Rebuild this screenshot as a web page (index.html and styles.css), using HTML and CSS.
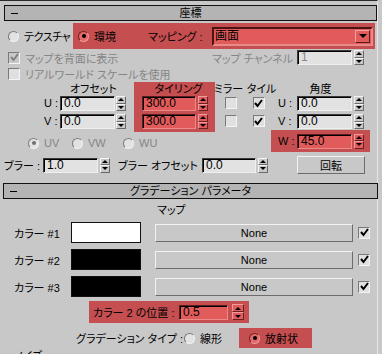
FILE: index.html
```html
<!DOCTYPE html>
<html>
<head>
    <title>座標 / グラデーション パラメータ</title>
    <link rel="stylesheet" href="styles.css">
</head>
<body>
<div class="frame">
    <div class="rollout"><span class="minus"></span><span class="rtitle">座標</span><span></span></div>

    <div class="row row-mode">
        <div class="opt opt-tex"><span class="radio"></span><span class="tex-text">テクスチャ</span></div>
        <div class="hl hl-mode">
            <div class="opt opt-env"><span class="radio on red"></span><span>環境</span></div>
            <span class="lbl-map">マッピング :</span>
            <div class="dropdown">
                <span class="dd-text">画面</span>
                <span class="dd-btn"><span class="tri-down"></span></span>
            </div>
        </div>
    </div>

    <div class="row row-chk">
        <span class="cb dis"><svg width="9" height="9" viewBox="0 0 9 9"><polyline points="1,4 3.5,7 8,1" fill="none" stroke="#808080" stroke-width="2"/></svg></span>
        <span class="dis-text w-back">マップを背面に表示</span>
        <span class="dis-text w-chan">マップ チャンネル :</span>
        <span class="field dis-field w55">1</span>
        <span class="spin"><span class="sb"><span class="tri-up"></span></span><span class="sb"><span class="tri-down"></span></span></span>
    </div>

    <div class="row row-chk2">
        <span class="cb"></span>
        <span class="dis-text w-real">リアルワールド スケールを使用</span>
    </div>

    <div class="sect">
        <div class="sect-left">
            <div class="sect-top">
                <div class="col col-lbl">
                    <div class="chead"></div>
                    <div class="crow18">U :</div>
                    <div class="crow18">V :</div>
                </div>
                <div class="col col-off">
                    <div class="chead">オフセット</div>
                    <div class="crow18"><span class="field w55">0.0</span><span class="spin ml1"><span class="sb"><span class="tri-up"></span></span><span class="sb"><span class="tri-down"></span></span></span></div>
                    <div class="crow18"><span class="field w55">0.0</span><span class="spin ml1"><span class="sb"><span class="tri-up"></span></span><span class="sb"><span class="tri-down"></span></span></span></div>
                </div>
                <div class="col hl hl-tile">
                    <div class="chead">タイリング</div>
                    <div class="crow18"><span class="field red w54">300.0</span><span class="spin red ml2"><span class="sb"><span class="tri-up"></span></span><span class="sb"><span class="tri-down"></span></span></span></div>
                    <div class="crow18"><span class="field red w54">300.0</span><span class="spin red ml2"><span class="sb"><span class="tri-up"></span></span><span class="sb"><span class="tri-down"></span></span></span></div>
                </div>
                <div class="col col-mir">
                    <div class="chead">ミラー</div>
                    <div class="crow18 cc"><span class="cb"></span></div>
                    <div class="crow18 cc"><span class="cb"></span></div>
                </div>
                <div class="col col-tile">
                    <div class="chead">タイル</div>
                    <div class="crow18 cc"><span class="cb"><svg width="9" height="9" viewBox="0 0 9 9"><polyline points="1,4 3.5,7 8,1" fill="none" stroke="#000" stroke-width="2"/></svg></span></div>
                    <div class="crow18 cc"><span class="cb"><svg width="9" height="9" viewBox="0 0 9 9"><polyline points="1,4 3.5,7 8,1" fill="none" stroke="#000" stroke-width="2"/></svg></span></div>
                </div>
            </div>
            <div class="uv-row">
                <div class="opt opt-uv"><span class="radio on dis"></span><span class="dis-text">UV</span></div>
                <div class="opt opt-vw"><span class="radio"></span><span class="dis-text">VW</span></div>
                <div class="opt"><span class="radio"></span><span class="dis-text">WU</span></div>
            </div>
        </div>
        <div class="sect-right">
            <div class="chead">角度</div>
            <div class="arow arow-u"><span class="alb">U :</span><span class="field w55">0.0</span><span class="spin ml2"><span class="sb"><span class="tri-up"></span></span><span class="sb"><span class="tri-down"></span></span></span></div>
            <div class="arow arow-v"><span class="alb">V :</span><span class="field w55">0.0</span><span class="spin ml2"><span class="sb"><span class="tri-up"></span></span><span class="sb"><span class="tri-down"></span></span></span></div>
            <div class="hl hl-w"><span class="alb">W :</span><span class="field red w55">45.0</span><span class="spin red ml2"><span class="sb"><span class="tri-up"></span></span><span class="sb"><span class="tri-down"></span></span></span></div>
        </div>
    </div>

    <div class="row row-blur">
        <span class="lb-blur">ブラー :</span>
        <span class="field w55">1.0</span>
        <span class="spin ml2"><span class="sb"><span class="tri-up"></span></span><span class="sb"><span class="tri-down"></span></span></span>
        <span class="lb-boff">ブラー オフセット :</span>
        <span class="field w54">0.0</span>
        <span class="spin ml2"><span class="sb"><span class="tri-up"></span></span><span class="sb"><span class="tri-down"></span></span></span>
        <span class="btn btn-rot">回転</span>
    </div>

    <div class="rollout rollout2"><span class="minus"></span><span class="rtitle">グラデーション パラメータ</span><span></span></div>

    <div class="map-head">マップ</div>

    <div class="colors">
        <div class="crow">
            <span class="clabel">カラー #1</span>
            <span class="swatch white"></span>
            <span class="btn none-btn">None</span>
            <span class="cb ccb"><svg width="9" height="9" viewBox="0 0 9 9"><polyline points="1,4 3.5,7 8,1" fill="none" stroke="#000" stroke-width="2"/></svg></span>
        </div>
        <div class="crow">
            <span class="clabel">カラー #2</span>
            <span class="swatch black"></span>
            <span class="btn none-btn">None</span>
            <span class="cb ccb"><svg width="9" height="9" viewBox="0 0 9 9"><polyline points="1,4 3.5,7 8,1" fill="none" stroke="#000" stroke-width="2"/></svg></span>
        </div>
        <div class="crow">
            <span class="clabel">カラー #3</span>
            <span class="swatch black"></span>
            <span class="btn none-btn">None</span>
            <span class="cb ccb"><svg width="9" height="9" viewBox="0 0 9 9"><polyline points="1,4 3.5,7 8,1" fill="none" stroke="#000" stroke-width="2"/></svg></span>
        </div>
    </div>

    <div class="hl hl-pos">
        <span class="lb-pos">カラー 2 の位置 :</span>
        <span class="field red w49">0.5</span>
        <span class="spin red tall ml4"><span class="sb"><span class="tri-up"></span></span><span class="sb"><span class="tri-down"></span></span></span>
    </div>

    <div class="row row-type">
        <span class="lb-type">グラデーション タイプ :</span>
        <div class="opt opt-lin"><span class="radio"></span><span>線形</span></div>
        <div class="hl hl-rad">
            <div class="opt"><span class="radio on red"></span><span>放射状</span></div>
        </div>
    </div>

    <div class="row-noise">ノイズ :</div>
</div>
</body>
</html>
```

FILE: styles.css
```css
body {
    margin: 0;
    width: 382px;
    height: 354px;
    overflow: hidden;
    background-color: #c8c8c8;
    font-family: "Liberation Sans", "Noto Sans CJK JP", sans-serif;
    font-size: 11px;
    color: #000;
    white-space: nowrap;
    font-feature-settings: "palt";
}
.frame {
    width: 377px;
    height: 353px;
    border-top: 1px solid #2a2a2a;
    border-right: 1px solid #e6e6e6;
}
.rollout {
    margin: 4px 0 0 4px;
    width: 373px;
    height: 16px;
    box-sizing: border-box;
    border: 1px solid #111;
    background-color: #b4b4b4;
    display: grid;
    grid-template-columns: 40px 1fr 40px;
    align-items: center;
    line-height: 14px;
}
.rollout2 {
    margin: 9px 0 0 3px;
    width: 375px;
}
.minus {
    display: block;
    width: 7px;
    height: 1px;
    margin-left: 6px;
    background-color: #000;
}
.rtitle {
    text-align: center;
}
.row {
    display: flex;
    align-items: center;
}
.hl {
    background-color: #c54f50;
}
.opt {
    display: flex;
    align-items: center;
    gap: 5px;
}

/* radio + checkbox */
.radio {
    width: 11px;
    height: 11px;
    flex-shrink: 0;
    box-sizing: border-box;
    border-radius: 50%;
    border: 1px solid;
    border-color: #7a7a7a #f2f2f2 #f2f2f2 #7a7a7a;
    background-color: #e2e2e2;
    display: flex;
    align-items: center;
    justify-content: center;
}
.radio.red {
    background-color: #e26a6a;
    border-color: #6e2222 #f09a9a #f09a9a #6e2222;
}
.radio.on::after {
    content: "";
    width: 4px;
    height: 4px;
    border-radius: 50%;
    background-color: #000;
}
.radio.dis::after {
    background-color: #707070;
}
.cb {
    width: 12px;
    height: 12px;
    flex-shrink: 0;
    box-sizing: border-box;
    border: 1px solid;
    border-color: #7a7a7a #f4f4f4 #f4f4f4 #7a7a7a;
    background-color: #e0e0e0;
    display: flex;
    align-items: center;
    justify-content: center;
}
.cb.dis {
    background-color: #c8c8c8;
}
.dis-text {
    color: #858585;
}

/* fields + spinners */
.field {
    height: 15px;
    flex-shrink: 0;
    box-sizing: border-box;
    border: 1px solid;
    border-color: #3a3a3a #f0f0f0 #f0f0f0 #3a3a3a;
    box-shadow: inset 1px 1px 0 #000;
    background-color: #e2e2e2;
    padding-left: 3px;
    line-height: 13px;
    font-size: 12px;
    display: block;
}
.field.red {
    background-color: #e25b5b;
    border-color: #5a1c1c #ec8a8a #ec8a8a #5a1c1c;
}
.dis-field {
    color: #8a8a8a;
}
.w49 { width: 49px; }
.w54 { width: 54px; }
.w55 { width: 55px; }
.ml1 { margin-left: 1px; }
.ml2 { margin-left: 2px; }
.ml4 { margin-left: 4px; }
.spin {
    width: 10px;
    height: 15px;
    flex-shrink: 0;
    display: flex;
    flex-direction: column;
}
.spin.tall {
    width: 12px;
    height: 16px;
}
.sb {
    flex: 1;
    box-sizing: border-box;
    border: 1px solid;
    border-color: #f4f4f4 #6a6a6a #6a6a6a #f4f4f4;
    background-color: #c8c8c8;
    display: flex;
    align-items: center;
    justify-content: center;
}
.spin.red .sb {
    background-color: #e25b5b;
    border-color: #f29a9a #6a2020 #6a2020 #f29a9a;
}
.tri-up {
    width: 0;
    height: 0;
    border-left: 3px solid transparent;
    border-right: 3px solid transparent;
    border-bottom: 3px solid #000;
}
.tri-down {
    width: 0;
    height: 0;
    border-left: 3px solid transparent;
    border-right: 3px solid transparent;
    border-top: 3px solid #000;
}
.btn {
    flex-shrink: 0;
    box-sizing: border-box;
    border: 1px solid;
    border-color: #f2f2f2 #6c6c6c #6c6c6c #f2f2f2;
    background-color: #c8c8c8;
    text-align: center;
    display: flex;
    align-items: center;
    justify-content: center;
}

/* mapping row */
.row-mode {
    margin-top: 2px;
    height: 26px;
}
.opt-tex {
    margin-left: 8px;
    width: 65px;
}
.tex-text {
    letter-spacing: -0.4px;
}
.hl-mode {
    width: 302px;
    height: 26px;
    box-sizing: border-box;
    padding-left: 5px;
    display: flex;
    align-items: center;
}
.opt-env {
    width: 70px;
}
.lbl-map {
    width: 64px;
}
.dropdown {
    width: 161px;
    height: 19px;
    box-sizing: border-box;
    border: 2px solid;
    border-color: #4a1414 #e88a8a #e88a8a #4a1414;
    background-color: #e25b5b;
    display: flex;
    align-items: center;
    justify-content: space-between;
    padding-right: 1px;
}
.dd-text {
    padding-left: 1px;
    line-height: 14px;
    font-size: 12px;
}
.dd-btn {
    width: 15px;
    height: 13px;
    box-sizing: border-box;
    border: 1px solid;
    border-color: #f4a2a2 #5c1a1a #5c1a1a #f4a2a2;
    display: flex;
    align-items: center;
    justify-content: center;
}
.dd-btn .tri-down {
    border-left-width: 4px;
    border-right-width: 4px;
    border-top-width: 4px;
}

/* check rows */
.row-chk {
    height: 17px;
}
.row-chk .cb,
.row-chk2 .cb {
    margin-left: 8px;
}
.w-back {
    margin-left: 5px;
    width: 187px;
}
.w-chan {
    width: 85px;
}
.row-chk .spin {
    margin-left: 2px;
}
.row-chk2 {
    height: 16px;
}
.w-real {
    margin-left: 5px;
}

/* offset / tiling / angle */
.sect {
    display: flex;
    height: 70px;
}
.sect-left {
    width: 271px;
    display: flex;
    flex-direction: column;
}
.sect-top {
    display: flex;
    height: 50px;
}
.col {
    display: flex;
    flex-direction: column;
}
.chead {
    height: 14px;
    line-height: 14px;
    text-align: center;
}
.crow18 {
    height: 18px;
    display: flex;
    line-height: 15px;
}
.crow18.cc {
    justify-content: center;
    padding-top: 1px;
    box-sizing: border-box;
}
.col-lbl {
    margin-left: 44px;
    width: 16px;
}
.col-off {
    width: 67px;
}
.hl-tile {
    margin-left: 7px;
    width: 81px;
    height: 50px;
    box-sizing: border-box;
    padding-left: 8px;
}
.col-mir {
    width: 31px;
    align-items: center;
}
.col-mir .chead {
    margin-right: 4px;
}
.col-tile {
    width: 25px;
    align-items: center;
}
.col-tile .chead {
    margin-left: 6px;
}
.uv-row {
    margin-top: 4px;
    height: 14px;
    display: flex;
    align-items: center;
}
.opt-uv {
    margin-left: 28px;
    width: 44px;
}
.opt-vw {
    width: 51px;
}
.sect-right {
    width: 99px;
    display: flex;
    flex-direction: column;
}
.arow {
    display: flex;
    padding-left: 7px;
    line-height: 15px;
}
.arow-u {
    height: 18px;
}
.arow-v {
    height: 16px;
}
.alb {
    width: 19px;
}
.hl-w {
    height: 22px;
    box-sizing: border-box;
    padding-left: 7px;
    display: flex;
    align-items: center;
}

/* blur row */
.row-blur {
    margin-top: 4px;
    height: 18px;
}
.lb-blur {
    margin-left: 4px;
    width: 39px;
}
.lb-boff {
    margin-left: 8px;
    width: 84px;
}
.btn-rot {
    margin-left: 29px;
    width: 68px;
    height: 18px;
}

/* gradient params */
.map-head {
    height: 23px;
    line-height: 23px;
    padding-left: 157px;
}
.colors {
    display: flex;
    flex-direction: column;
    gap: 6px;
}
.crow {
    display: flex;
    align-items: center;
    height: 21px;
}
.clabel {
    margin-left: 14px;
    width: 57px;
}
.swatch {
    width: 70px;
    height: 21px;
    box-sizing: border-box;
    border: 1px solid #111;
}
.swatch.white {
    background-color: #fff;
}
.swatch.black {
    background-color: #000;
}
.none-btn {
    margin-left: 14px;
    width: 198px;
    height: 18px;
}
.ccb {
    margin-left: 5px;
}
.hl-pos {
    margin: 4px 0 0 89px;
    width: 160px;
    height: 22px;
    box-sizing: border-box;
    padding-left: 4px;
    display: flex;
    align-items: center;
}
.lb-pos {
    width: 86px;
}
.row-type {
    margin-top: 5px;
    height: 20px;
}
.lb-type {
    margin-left: 76px;
    width: 108px;
}
.opt-lin {
    width: 55px;
}
.hl-rad {
    width: 73px;
    height: 20px;
    box-sizing: border-box;
    padding-left: 10px;
    display: flex;
    align-items: center;
}
.row-noise {
    margin: 1px 0 0 14px;
    line-height: 14px;
}
```
